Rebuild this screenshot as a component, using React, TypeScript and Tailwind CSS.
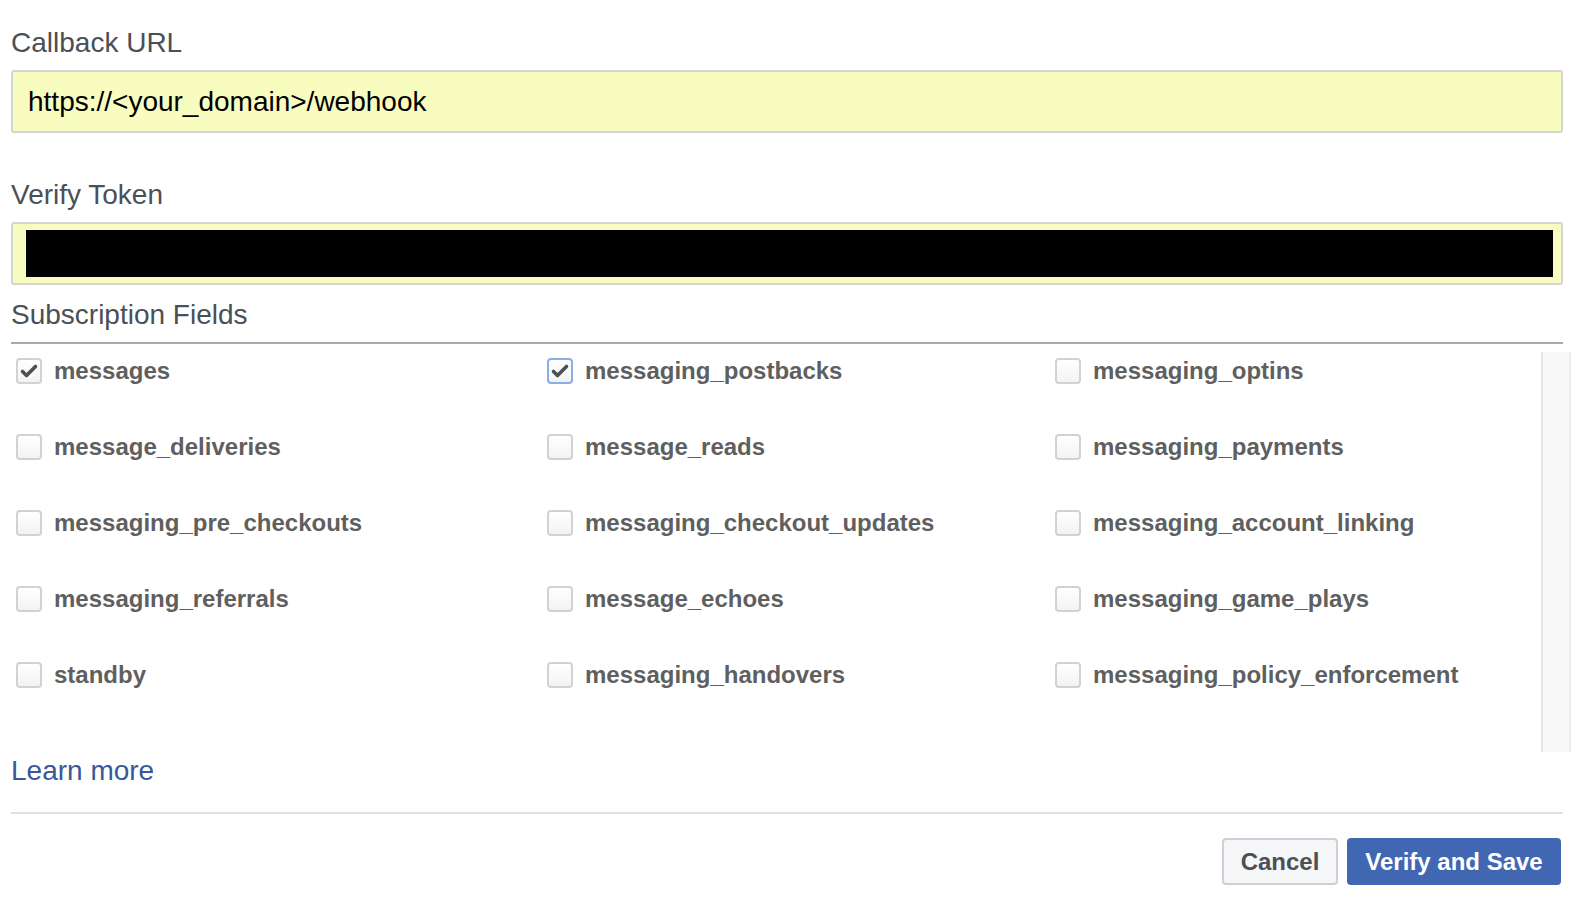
import React from "react";

const rows: [string, boolean][][] = [
  [["messages", true], ["messaging_postbacks", true], ["messaging_optins", false]],
  [["message_deliveries", false], ["message_reads", false], ["messaging_payments", false]],
  [["messaging_pre_checkouts", false], ["messaging_checkout_updates", false], ["messaging_account_linking", false]],
  [["messaging_referrals", false], ["message_echoes", false], ["messaging_game_plays", false]],
  [["standby", false], ["messaging_handovers", false], ["messaging_policy_enforcement", false]],
];

function Check({ checked, focused }: { checked: boolean; focused?: boolean }) {
  return (
    <div
      className={
        "relative w-[26px] h-[26px] shrink-0 rounded-[4px] border-2 bg-gradient-to-b from-white to-[#f3f3f3] " +
        (focused ? "border-[#8aaee8]" : "border-[#d2d2d2]")
      }
    >
      {checked && (
        <svg viewBox="0 0 26 26" width="26" height="26" className="absolute left-[-2px] top-[-2px]">
          <path d="M6.5 13.5 L10.5 17.5 L19.5 8.5" fill="none" stroke="#4b4f56" strokeWidth="3.6" strokeLinecap="round" strokeLinejoin="round" />
        </svg>
      )}
    </div>
  );
}

export default function App() {
  return (
    <div className="w-[1587px] h-[905px] bg-white overflow-hidden pl-[11px] pt-[27px]" style={{ fontFamily: '"Liberation Sans", Arial, sans-serif' }}>
      <div className="w-[1552px]">
        <div className="text-[28px] leading-[32px] text-[#4b4f56]">Callback URL</div>
        <div className="mt-[11px] h-[63px] border-2 border-[#d4d4d4] rounded-[3px] bg-[#f9fcbf] flex items-center pl-[15px] text-[28px] leading-[32px] text-black">
          https://&lt;your_domain&gt;/webhook
        </div>
        <div className="mt-[46px] text-[28px] leading-[32px] text-[#4b4f56]">Verify Token</div>
        <div className="mt-[11px] h-[63px] border-2 border-[#d4d4d4] rounded-[3px] bg-[#f9fcbf] pl-[13px] pr-[8px] py-[6px]">
          <div className="h-full bg-black" />
        </div>
        <div className="mt-[14px] text-[28px] leading-[32px] text-[#4b4f56]">Subscription Fields</div>
        <div className="mt-[11px] h-[2px] bg-[#a9a9a9]" />
      </div>
      <div className="flex w-[1560px]">
        <div className="flex-1 flex flex-col gap-[50px] pt-[13px] pb-[65px]">
          {rows.map((r, i) => (
            <div key={i} className="grid grid-cols-[531px_508px_1fr] h-[26px]">
              {r.map(([name, checked], j) => (
                <div key={j} className="flex items-center gap-[12px] pl-[5px]">
                  <Check checked={checked} focused={i === 0 && j === 1} />
                  <span className="text-[24px] leading-[28px] font-bold text-[#5f5f5f] whitespace-nowrap">{name}</span>
                </div>
              ))}
            </div>
          ))}
        </div>
        <div className="w-[30px] mt-[8px] bg-[#f8f8f8] border-l-2 border-r-2 border-l-[#e6e6e6] border-r-[#ececec]" />
      </div>
      <div className="w-[1552px]">
        <div className="mt-[3px] text-[28px] leading-[32px] text-[#385898]">Learn more</div>
        <div className="mt-[25px] h-[2px] bg-[#dddfe2]" />
        <div className="mt-[24px] flex justify-end gap-[9px] pr-[2px]">
          <button className="w-[116px] h-[47px] rounded-[4px] border-2 border-[#ccd0d5] bg-[#f5f6f7] text-[24px] font-bold text-[#4b4f56]">
            Cancel
          </button>
          <button className="w-[214px] h-[47px] rounded-[4px] bg-[#4267b2] text-[24px] font-bold text-white">
            Verify and Save
          </button>
        </div>
      </div>
    </div>
  );
}
